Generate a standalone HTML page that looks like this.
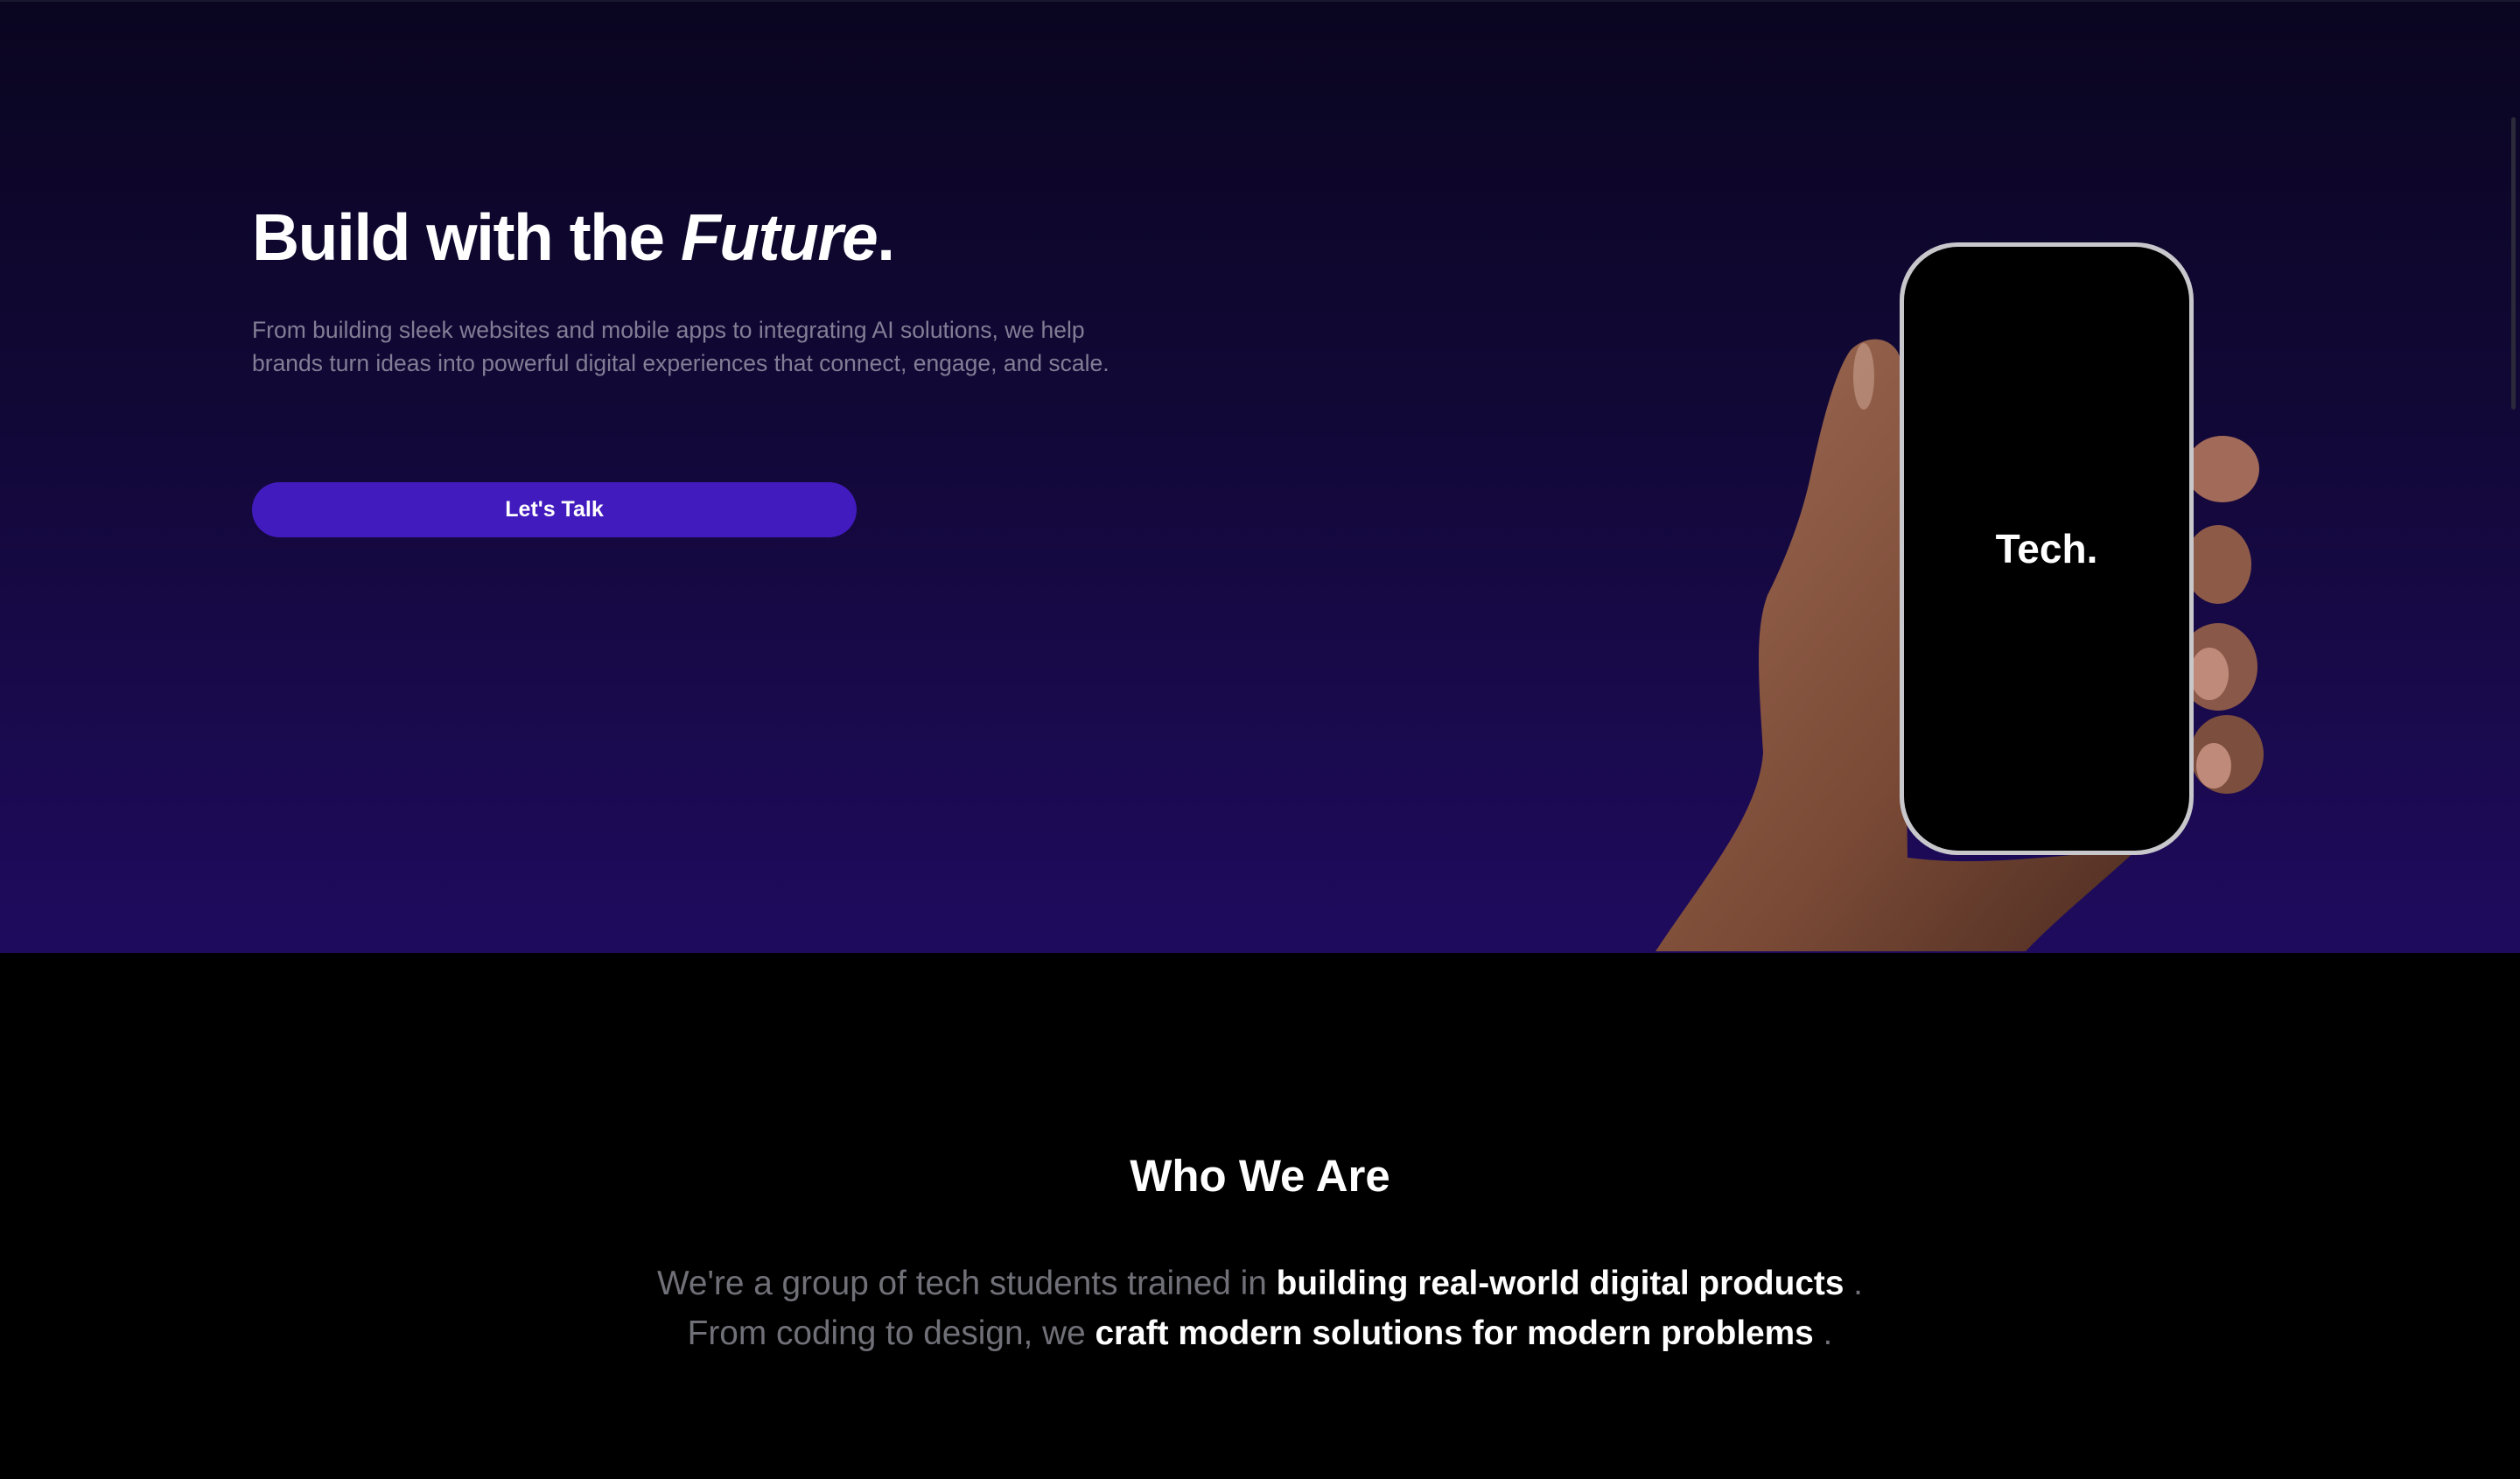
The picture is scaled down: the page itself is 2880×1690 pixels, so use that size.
<!DOCTYPE html>
<html><head><meta charset="utf-8"><style>
html,body{margin:0;padding:0;background:#000;width:2880px;height:1690px;overflow:hidden;font-family:"Liberation Sans",sans-serif}
.hero{position:absolute;left:0;top:0;width:2880px;height:1087px;background:linear-gradient(180deg,#0a0520 0%,#120838 45%,#1f0b5e 100%);border-top:2px solid #1a1830}
h1{position:absolute;left:288px;top:234px;margin:0;font-size:75px;font-weight:700;color:#fff;letter-spacing:-1.5px;line-height:1}
h1 i{font-style:italic}
.p{position:absolute;left:288px;top:358px;width:1000px;font-size:26.5px;line-height:38px;color:#837d95}
.btn{position:absolute;left:288px;top:551px;width:691px;height:63px;border-radius:32px;background:#421bbf;color:#fff;font-size:25px;font-weight:700;text-align:center;line-height:63px}
.who{position:absolute;left:0;width:2880px;top:1314px;text-align:center;color:#fff;font-size:51px;font-weight:700}
.l{position:absolute;left:0;width:2880px;text-align:center;font-size:38.8px;color:#707078}
.l b{color:#fff;font-weight:700}
.sb{position:absolute;left:2870px;top:134px;width:5px;height:334px;background:#2a2a3a;border-radius:3px}
</style></head><body>
<div class="hero"></div>
<h1>Build with the <i>Future</i>.</h1>
<div class="p">From building sleek websites and mobile apps to integrating AI solutions, we help brands turn ideas into powerful digital experiences that connect, engage, and scale.</div>
<div class="btn">Let's Talk</div>
<svg style="position:absolute;left:0;top:0" width="2880" height="1087" viewBox="0 0 2880 1087">
<defs>
<linearGradient id="sk" x1="0" y1="0" x2="1" y2="1"><stop offset="0" stop-color="#a06c55"/><stop offset="0.6" stop-color="#7a4a36"/><stop offset="1" stop-color="#4e2d22"/></linearGradient>
</defs>
<path d="M1892 1087 C1950 1000 2010 930 2015 860 C2010 780 2005 720 2020 680 C2040 640 2060 590 2070 540 C2085 470 2100 420 2115 400 C2135 380 2165 385 2172 410 L2180 980 C2260 990 2330 980 2443 970 C2400 1010 2350 1050 2315 1087 Z" fill="url(#sk)"/>
<ellipse cx="2540" cy="536" rx="42" ry="38" fill="#a26a58"/>
<ellipse cx="2535" cy="645" rx="38" ry="45" fill="#8d5a48"/>
<ellipse cx="2535" cy="762" rx="45" ry="50" fill="#8a5848"/>
<ellipse cx="2545" cy="862" rx="42" ry="45" fill="#7c4e3e"/>
<ellipse cx="2525" cy="770" rx="22" ry="30" fill="#c08a7a"/>
<ellipse cx="2530" cy="875" rx="20" ry="26" fill="#c08a7a"/>
<ellipse cx="2130" cy="430" rx="12" ry="38" fill="#c9a090" opacity=".6"/>
<rect x="2171" y="277" width="336" height="700" rx="66" fill="#c8c8cc"/>
<rect x="2176" y="282" width="326" height="690" rx="62" fill="#000"/>
<text x="2339" y="643" text-anchor="middle" font-family="Liberation Sans,sans-serif" font-weight="700" font-size="46" fill="#fff">Tech.</text>
</svg>
<div class="who">Who We Are</div>
<div class="l" style="top:1445px">We're a group of tech students trained in <b>building real-world digital products</b> .</div>
<div class="l" style="top:1502px">From coding to design, we <b>craft modern solutions for modern problems</b> .</div>
<div class="sb"></div>
</body></html>
